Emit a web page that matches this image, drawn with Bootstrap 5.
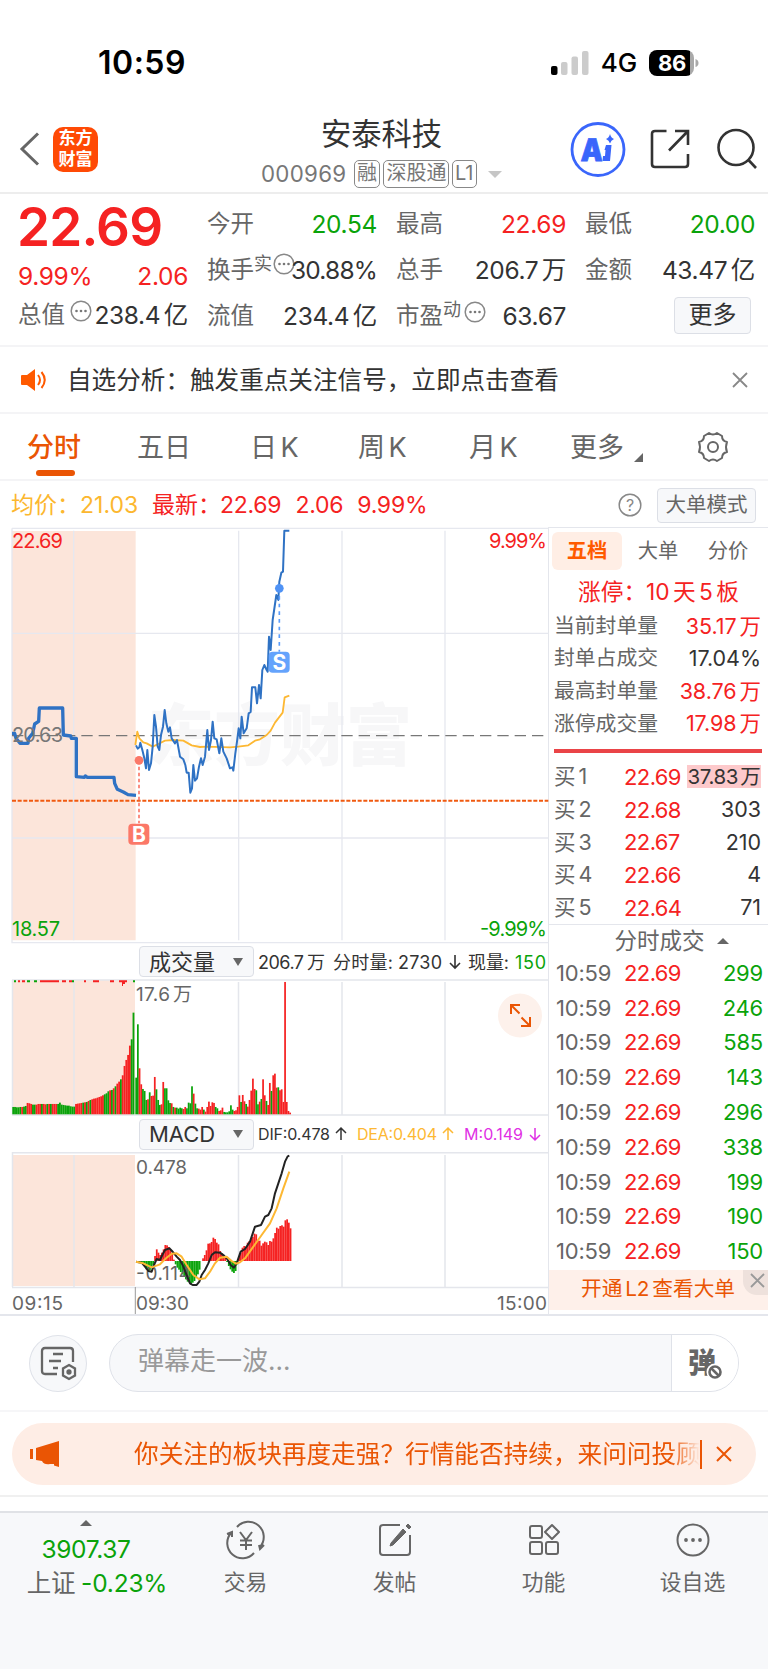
<!DOCTYPE html>
<html lang="zh-CN">
<head>
<meta charset="utf-8">
<meta name="viewport" content="width=device-width, initial-scale=1">
<title>安泰科技 000969</title>
<link href="https://cdn.jsdelivr.net/npm/bootstrap@5.3.0/dist/css/bootstrap.min.css" rel="stylesheet">
<style>
:root{--up:#f52222;--dn:#0aa30a;--or:#ea5504;--g6:#666;--ink:#333;--ln:#e4e6ec}
body{font-family:Inter,"Noto Sans CJK SC",sans-serif;color:var(--ink);background:#fff;width:768px;height:1670px;overflow:hidden;line-height:1;font-size:24px}
svg{display:block;flex:none;overflow:visible}
span,div{white-space:nowrap}
.up{color:var(--up)}.dn{color:var(--dn)}.g6{color:var(--g6)}.or{color:var(--or)}
.statusbar{height:106px;padding:19px 69px 0 98px;color:#000}
.clock{font-size:32px;font-weight:600;letter-spacing:.5px}
.net{font-size:26px;font-weight:500;letter-spacing:-.1px}
.batt{width:45px;height:26px;border-radius:8px;background:linear-gradient(90deg,#000 41px,#a9a9a9 41px);color:#fff;font-size:22px;font-weight:700;padding-left:9px;line-height:26px;letter-spacing:-.3px}
.topbar{height:88px;border-bottom:2px solid #ededed;padding:0 10px 0 20px}
.applogo{width:45px;height:45px;border-radius:10px;background:#ff4a05;color:#fff;font-size:17px;line-height:21px;font-weight:700;text-align:center;padding-top:1px}
.stockname{font-size:30.3px;line-height:30px}
.code{font-size:22.3px;letter-spacing:.3px;color:#777;line-height:28px}
.tagbox{border:1.6px solid #888;border-radius:5px;height:28px;line-height:25px;font-size:20px;color:#777;padding:0 2px}
.quote{height:153px;border-bottom:2px solid #f4f4f6;padding:0 13px 0 18px}
.quote .c0{width:170px;margin-right:19px}
.quote .cx{width:170px;margin-right:19px}
.qr{height:46px;display:flex;align-items:center;justify-content:space-between;letter-spacing:-.35px;font-size:24.5px;word-spacing:-3px}
.qr>.g6{letter-spacing:0;font-size:23.5px}
.bigp{font-size:53px;font-weight:600;letter-spacing:-.8px;height:69px;line-height:67px;margin-left:-1px}
.sup1{font-size:18px;position:relative;top:-8px}
.morebtn{border:1.5px solid #dcdfe6;background:#f7f8fa;border-radius:4px;text-align:center;color:var(--ink)}
.morebtn.g6{color:var(--g6)}
.notice{height:67px;border-bottom:2px solid #f4f4f6;padding:1px 20px 0 21px;font-size:24.6px}
.tabs{height:67px;border-bottom:2px solid #f4f4f6;color:var(--g6);font-size:27px;position:relative;word-spacing:-4px}
.tabs>span{line-height:67px}
.tabs .on{position:relative;color:var(--or);font-weight:500}
.tabs .on:after{content:"";position:absolute;left:9px;top:56px;width:39px;height:6px;border-radius:3px;background:var(--or)}
.avgrow{height:46px;padding:2px 12px 0 11px;font-size:23px}
.chartcol{width:537px;margin-left:12px;border-right:1.5px solid var(--ln)}
.sidecol{width:219px}
.selrow{height:37px;padding-left:127px;font-size:18px}
.selrow .morebtn{width:115px;height:31px;font-size:22px;display:flex;align-items:center;justify-content:space-between;padding:0 10px 0 9px}
.tri-d{border:5px solid transparent;border-top:8px solid #666;border-bottom:0}
.tri-u{border:6px solid transparent;border-bottom:6px solid #666;border-top:0}
.sidetabs span{width:70px;height:38px;line-height:37px;text-align:center;font-size:20.3px;color:var(--g6)}
.sidetabs .on{background:#ffeee5;border-radius:6px;color:#ff5a00;font-weight:700}
.sr{display:flex;align-items:center;padding:0 7px 0 5px;font-size:21.5px;word-spacing:-3px;letter-spacing:-.05px}
.sr>.g6{font-size:20.8px;letter-spacing:0}
.sr .l{width:70px;color:var(--g6);flex:none}
.sr .p{width:63px;color:var(--up);font-size:22px;letter-spacing:-.6px;flex:none}
.sr .v{margin-left:auto}
.hl{display:block;width:74px;background:#fdc9cb;line-height:23px;text-align:center;font-size:20.5px;letter-spacing:-.4px}
.l2{height:40px;background:#fef0ea;font-size:20.7px;color:var(--or);position:relative;text-align:center;line-height:38px;word-spacing:-3px;padding-right:1px}
.l2x{position:absolute;right:0;top:0;width:25px;height:25px;border-radius:0 0 0 14px;background:#eee1dc}
.danmu{height:98px;border-top:2px solid var(--ln);border-bottom:2px solid #f6f6f8;padding:0 29px 0 29px}
.rnd{width:58px;height:57px;border-radius:50%;border:1.5px solid #dfe2e9;background:#f7f8fa}
.pillin{width:631px;height:58px;border-radius:29px;border:1.5px solid #dfe2e9;background:#f7f8fa;overflow:hidden}
.promo{height:62px;margin:11px 12px 0;border-radius:31px;background:#feede5;color:var(--or);font-size:24.65px}
.promo .msg{width:566px;overflow:hidden;height:32px;line-height:33px;-webkit-mask:linear-gradient(90deg,#000 536px,transparent 566px);mask:linear-gradient(90deg,#000 536px,transparent 566px)}
.botbar{height:158px;border-top:2px solid #e0e2e6;background:#f7f8fa;margin-top:14px;color:var(--g6)}
.botbar .it{width:149px;font-size:21.8px;padding-top:10px}
</style>
</head>
<body>
<div class="statusbar d-flex align-items-center">
  <span class="clock">10:59</span>
  <svg class="ms-auto" width="38" height="24"><rect y="15" width="6.5" height="9" rx="2"/><g fill="#ccc"><rect x="10" y="11" width="6.5" height="13" rx="2"/><rect x="20.5" y="5.500" width="6.500" height="18.500" rx="2"/><rect x="31" width="6.500" height="24" rx="2"/></g></svg>
  <span class="net" style="margin-left:12px;margin-right:12px">4G</span>
  <span class="batt">86</span>
  <svg width="5" height="8"><path d="M1.500 0q3 1 3 4t-3 4z" fill="#a9a9a9"/></svg>
</div>
<div class="topbar d-flex align-items-center">
  <svg width="19" height="34" fill="none" stroke="#666" stroke-width="3"><path d="M18 1.500 2 17l16 15.500"/></svg>
  <div class="applogo" style="margin-left:14px">东方<br>财富</div>
  <div class="d-flex flex-column align-items-center" style="margin-left:162px;width:243px;padding-top:9px">
    <span class="stockname">安泰科技</span>
    <div class="d-flex align-items-center" style="margin-top:11px;gap:3.500px"><span class="code me-1">000969</span><span class="tagbox">融</span><span class="tagbox" style="margin-right:-1px">深股通</span><span class="tagbox">L1</span><svg width="14" height="7" style="margin-left:8px"><path d="M0 0h14L7 7z" fill="#c6c6c6"/></svg></div>
  </div>
  <svg class="ms-auto" width="56" height="56" viewBox="0 0 56 56"><circle cx="28" cy="28.500" r="26" fill="none" stroke="#3a66fb" stroke-width="2.800"/><text transform="translate(10.500 39.500) skewX(-2)" font-size="31" font-weight="900" fill="#3a66fb" stroke="#3a66fb" stroke-width=".8" textLength="22" lengthAdjust="spacingAndGlyphs">A</text><path d="M36 24h5.500l-1.500 16h-7.500l.5-5h2l.5-6h-1zM40 13q1 4 4 5-3 1-4 4.500-1-3.500-4-4.500 3-1 4-5z" fill="#3a66fb"/></svg>
  <svg width="40" height="40" style="margin-left:24px" fill="none" stroke="#333" stroke-width="2.600"><path d="M16.500 2H5Q2 2 2 5v30q0 3 3 3h30q3 0 3-3V25M38 16V2H25M38 2 19 21.500"/></svg>
  <svg width="42" height="42" style="margin-left:26px" fill="none" stroke="#333" stroke-width="2.600"><circle cx="20" cy="19.500" r="17.500"/><path d="M32 31.500 40 40"/></svg>
</div>
<div class="quote d-flex">
  <div class="c0"><div class="bigp up">22.69</div><div class="qr up" style="height:26px"><span>9.99%</span><span>2.06</span></div><div class="qr" style="margin-top:3px"><span class="g6">总值</span><svg width="22" height="22" style="margin:-8px -2px 0 0"><use href="#dots"/></svg><span>238.4 亿</span></div></div>
  <div class="cx pt-1"><div class="qr" style="margin-top:3px"><span class="g6">今开</span><span class="dn">20.54</span></div><div class="qr"><span class="g6">换手<span class="sup1">实</span></span><svg width="22" height="22" style="margin:-12px -1px 0 1px"><use href="#dots"/></svg><span style="letter-spacing:-.8px;margin-left:-3px">30.88%</span></div><div class="qr"><span class="g6">流值</span><span>234.4 亿</span></div></div>
  <div class="cx pt-1"><div class="qr" style="margin-top:3px"><span class="g6">最高</span><span class="up">22.69</span></div><div class="qr"><span class="g6">总手</span><span>206.7 万</span></div><div class="qr"><span class="g6">市盈<span class="sup1">动</span></span><svg width="22" height="22" style="margin:-8px 14px 0 0"><use href="#dots"/></svg><span>63.67</span></div></div>
  <div class="cx pt-1 me-0"><div class="qr" style="margin-top:3px"><span class="g6">最低</span><span class="dn">20.00</span></div><div class="qr"><span class="g6">金额</span><span>43.47 亿</span></div><div class="qr justify-content-end"><span class="morebtn" style="width:77px;height:37px;line-height:33px;margin-right:4px;letter-spacing:0;font-size:24px;margin-top:-2px">更多</span></div></div>
</div>
<svg width="0" height="0" class="position-absolute"><defs><g id="dots"><circle cx="11" cy="11" r="9.800" fill="none" stroke="#888" stroke-width="1.500"/><g fill="#777"><circle cx="6.500" cy="11" r="1.300"/><circle cx="11" cy="11" r="1.300"/><circle cx="15.500" cy="11" r="1.300"/></g></g></defs></svg>
<div class="notice d-flex align-items-center">
  <svg width="26" height="22"><path d="M1 6h5l8-6v22l-8-6H1Q0 16 0 15V7q0-1 1-1z" fill="#ff5a00"/><path d="M17 6q4 5 0 10M20.500 3q6.500 8 0 16" fill="none" stroke="#ff5a00" stroke-width="2"/></svg>
  <span style="margin-left:20px">自选分析：触发重点关注信号，立即点击查看</span>
  <svg class="ms-auto" width="16" height="16" stroke="#888" stroke-width="1.800"><path d="M1 1l14 14M15 1 1 15"/></svg>
</div>
<div class="tabs d-flex">
  <span class="on" style="margin-left:27px;width:110px">分时</span><span style="width:113px">五日</span><span style="width:108px">日 K</span><span style="width:111px">周 K</span><span style="width:101px">月 K</span><span>更多</span>
  <svg width="9" height="9" style="margin:39px 0 0 10px"><path d="M9 0v9H0z" fill="#666"/></svg>
  <svg width="32" height="32" style="margin:17px 0 0 54px" fill="none" stroke="#666" stroke-width="2" stroke-linejoin="round"><path d="M12 2q4 3 8 0l5 3q0 5 5 6-2 5 0 10-5 1-5 6l-5 3q-4-3-8 0l-5-3q0-5-5-6 2-5 0-10 5-1 5-6z"/><circle cx="16" cy="16" r="5"/></svg>
</div>
<div class="avgrow d-flex align-items-center">
  <span style="color:#fcb72f;width:69px">均价：</span><span style="color:#fcb72f;width:72px">21.03</span><span class="up" style="width:68px">最新：</span><span class="up d-flex" style="gap:14px;letter-spacing:-.25px"><span>22.69</span><span>2.06</span><span>9.99%</span></span>
  <svg class="ms-auto" width="24" height="24" style="margin-right:15px"><circle cx="12" cy="12" r="10.800" fill="none" stroke="#888" stroke-width="1.500"/><text x="12" y="17.500" font-size="16" text-anchor="middle" fill="#888">?</text></svg>
  <span class="morebtn g6" style="width:99px;height:35px;font-size:20.5px;line-height:31px">大单模式</span>
</div>
<div class="d-flex" style="height:787px">
 <div class="chartcol">
  <svg width="537" height="416" font-size="20">
   <g transform="translate(-12 -7) scale(.33333)" fill="none">
    <path d="M36 33H407V1261H36z" fill="#fce5da"/>
    <text x="444" y="720" font-size="200" font-weight="900" fill="#f7f7f8" textLength="792" lengthAdjust="spacingAndGlyphs">东方财富</text>
    <path d="M36 25H1645M36 25V1268H1645M36 340H1645M36 954H1645M221 32V1261M716 32V1261M1026 32V1261M1335 32V1261" stroke="#e6e8ef" stroke-width="4"/>
    <path d="M36 647H1645" stroke="#777" stroke-width="4" stroke-dasharray="34 18"/>
    <path d="M36 842H1645" stroke="#f05a10" stroke-width="6" stroke-dasharray="12 5"/>
    <g stroke-linejoin="round">
    <path d="M406 675 412 635 418 655 430 667 440 670 458 680 475 672 495 662 520 660 550 662 575 676 600 681 620 680 690 682 715 680 745 676 765 662 780 658 800 645 812 632 825 608 848 578 854 532 868 527" stroke="#fdb833" stroke-width="5.500"/>
    <path d="M36 640H44L48 655 60 670H84L86 655 98 640 104 612 116 604 118 564H188L190 645 212 648 214 655H229V770L253 772 256 768 262 772H342L344 790 352 808 370 816 384 824 408 826" stroke="#2f72c4" stroke-width="10"/>
    <path d="M408 676 413 686 418 682 421 668 427 690 433 715 438 745 442 690 447 750 453 730 458 680 463 585 468 620 473 680 478 690 483 645 489 620 494 570 499 610 505 635 510 622 515 655 525 670 531 660 540 710 550 718 556 735 560 758 566 758 571 818 576 805 580 735 585 782 591 775 597 740 603 715 608 735 615 710 622 630 627 690 633 660 638 605 643 655 650 658 658 700 664 655 670 695 680 715 690 745 697 742 700 752 706 700 711 665 716 625 721 655 725 590 731 640 740 625 746 580 752 576 756 502 766 502 771 550 777 495 782 535 787 450 793 435 800 450 803 455 807 350 812 390 818 300 829 225 835 240 838 185 844 158 849 155 853 32 868 32" stroke="#2f72c4" stroke-width="6"/>
    </g>
    <path d="M417 722V910" stroke="#fb7868" stroke-width="5" stroke-dasharray="11 7"/><circle cx="417" cy="721" r="13" fill="#fb7868"/><rect x="385" y="911" width="63" height="63" rx="12" fill="#fb7868"/>
    <path d="M838 205V395" stroke="#5b9dfb" stroke-width="5" stroke-dasharray="11 12"/><circle cx="838" cy="205" r="13" fill="#4f92f5"/><rect x="806" y="395" width="63" height="63" rx="12" fill="#64a3fc"/>
    <g fill="#fff" font-size="63" font-weight="700" text-anchor="middle"><text x="417" y="966">B</text><text x="838" y="449">S</text></g>
   </g>
   <g fill="#f52222"><text x="0" y="20.500" textLength="51">22.69</text><text x="477" y="20.500" textLength="58">9.99%</text></g>
   <text x="0" y="214.500" fill="#777" textLength="51">20.63</text>
   <g fill="#0aa30a"><text x="0" y="408.500" textLength="48">18.57</text><text x="468" y="408.500" textLength="67">-9.99%</text></g>
  </svg>
  <div class="selrow d-flex align-items-center">
   <div class="morebtn"><span>成交量</span><i class="tri-d"></i></div>
   <svg width="280" height="36"><g font-size="18" fill="#333"><text x="4" y="24.500" textLength="46">206.7</text><text x="53" y="24.500">万</text><text x="79" y="24.500" textLength="60">分时量:</text><text x="144" y="24.500" textLength="44">2730</text><text x="214" y="24.500" textLength="41">现量:</text><text x="261" y="24.500" textLength="31" fill="#0aa30a">150</text></g><path d="M201 11V24M196 19l5 5 5-5" fill="none" stroke="#333" stroke-width="1.600"/></svg>
  </div>
  <svg width="537" height="136">
   <path d="M0 0H123V134H0z" fill="#fce5da"/>
   <path d="M0 0H537M0 135H537M.5 0V135M62 2V135M226.500 2V135M330 2V135M433 2V135" stroke="#e4e6ec" stroke-width="1.500" fill="none"/>
   <path d="M2 1.300h2M15 1.300h3M22 1.300h3M60 1.300h2M121 1.300h2" stroke="#0aa30a" stroke-width="2"/><path d="M6 1.300h2M10 1.300h3M28 1.300h19M50 1.300h4M57 1.300h3M72 1.300h2M81 1.300h6M98 1.300h4M107 1.300h8M110 3h3M110 5h1" stroke="#f52222" stroke-width="2"/>
   <g id="vol"></g>
   <g font-size="19" fill="#666"><text x="124" y="21" textLength="34">17.6</text><text x="161" y="21">万</text></g>
   <circle cx="508" cy="35.500" r="22" fill="#fdf1eb"/><path d="M499 34v-9h9M499.500 25.500l8 8M518 37v9h-9M517.500 45.500l-8-8" stroke="#ea5504" stroke-width="2" fill="none"/>
  </svg>
  <div class="selrow d-flex align-items-center" style="height:36px">
   <div class="morebtn" style="height:31px"><span>MACD</span><i class="tri-d"></i></div>
   <svg width="280" height="36"><g font-size="16"><text x="4" y="23.500" textLength="72" fill="#333">DIF:0.478</text><text x="103" y="23.500" textLength="80" fill="#fdb833">DEA:0.404</text><text x="210" y="23.500" textLength="59" fill="#df2fe4">M:0.149</text></g><g fill="none" stroke-width="1.500"><path d="M87 24V12M82 17l5-5 5 5" stroke="#333"/><path d="M194 24V12M189 17l5-5 5 5" stroke="#fdb833"/><path d="M281 12V24M276 19l5 5 5-5" stroke="#df2fe4"/></g></svg>
  </div>
  <svg width="537" height="162">
   <path d="M0 3H123V134H0z" fill="#fce5da"/>
   <path d="M0 .8H537M0 135.500H537M.5 0V135M62 3V135M226.500 3V135M330 3V135M433 3V135" stroke="#e4e6ec" stroke-width="1.500" fill="none"/>
   <path d="M123.300 135V162" stroke="#999"/>
   <g id="macd"></g>
   <g font-size="19" fill="#666"><text x="124" y="21.500" textLength="51">0.478</text><text x="124" y="128" textLength="55">-0.114</text><text x="0" y="158" textLength="51">09:15</text><text x="124" y="158" textLength="53">09:30</text><text x="485" y="158" textLength="50">15:00</text></g>
   <g transform="translate(-12 -217) scale(.33333)" fill="none" stroke-width="6" stroke-linejoin="round">
    <path d="M408 980 425 983 435 995 445 1008 455 1010 462 990 470 972 480 975 487 960 495 945 508 940 516 948 522 955 530 965 540 975 548 990 558 1015 570 1045 578 1050 590 1050 598 1040 605 1020 615 1005 625 985 635 960 645 952 660 953 672 962 682 972 692 990 702 998 710 985 722 950 735 942 750 920 765 875 783 870 795 845 805 840 815 820 825 775 835 745 845 715 855 680 863 664 868 662" stroke="#222"/>
    <path d="M408 980 430 985 455 997 480 988 500 968 515 956 530 955 545 965 560 990 580 1020 598 1033 615 1030 630 1010 645 985 660 968 680 965 695 978 708 986 720 982 735 970 760 935 785 900 810 865 830 820 850 760 868 710" stroke="#fdb833"/>
   </g>
  </svg>
 </div>
 <div class="sidecol" style="border-top:1.500px solid var(--ln)">
  <div class="sidetabs d-flex" style="padding:4px 0 0 3px"><span class="on">五档</span><span style="margin-left:1px">大单</span><span>分价</span></div>
  <div class="up text-center" style="font-size:22.700px;height:38px;line-height:40px;margin-top:2px;word-spacing:-3px">涨停：10 天 5 板</div>
  <div class="seal"><div class="sr"><span class="g6">当前封单量</span><span class="v up">35.17 万</span></div><div class="sr"><span class="g6">封单占成交</span><span class="v">17.04%</span></div><div class="sr"><span class="g6">最高封单量</span><span class="v up">38.76 万</span></div><div class="sr"><span class="g6">涨停成交量</span><span class="v up">17.98 万</span></div></div>
  <div style="height:4px;background:#ea4447;margin:9px 6px 7px 5px"></div>
  <div class="bids"></div>
  <div class="d-flex justify-content-center align-items-center g6" style="border-top:1.500px solid var(--ln);height:32px;font-size:22.500px;gap:12px;padding-left:26px"><span>分时成交</span><i class="tri-u"></i></div>
  <div class="ticks"></div>
  <div class="l2">开通 L2 查看大单<div class="l2x"><svg width="25" height="24" stroke="#999" stroke-width="1.800"><path d="M8 4l13 13M21 4 8 17"/></svg></div></div>
 </div>
</div>
<div class="danmu d-flex align-items-center">
  <div class="rnd d-flex align-items-center justify-content-center"><svg width="38" height="34" fill="none" stroke="#666" stroke-width="2.300"><path d="M18 28H6q-3 0-3-3V5q0-3 3-3h25q3 0 3 3v11M14 8h10M10 15h12M14 22h5"/><path d="M30 19l6 3.500v7L30 33l-6-3.500v-7z"/><circle cx="30" cy="26" r="1.500" fill="#666"/></svg></div>
  <div class="pillin d-flex align-items-center" style="margin-left:22px"><span style="margin-left:28px;width:533px;font-size:26px;color:#999;padding-bottom:4px">弹幕走一波...</span><div class="h-100 bg-white d-flex align-items-center flex-fill" style="border-left:1.500px solid #dfe2e9;padding-left:16px"><svg width="36" height="36"><text x="0" y="28" font-size="28" font-weight="900" fill="#666">弹</text><circle cx="27" cy="27" r="6" fill="#fff" stroke="#fff" stroke-width="5"/><circle cx="27" cy="27" r="5.500" fill="#fff" stroke="#666" stroke-width="2.600"/><path d="M23 23l8 8" stroke="#666" stroke-width="2.500"/></svg></div></div>
</div>
<div class="promo d-flex align-items-center">
  <svg width="30" height="26" style="margin-left:18px" fill="#ea5504"><path d="M0 8h3v10H0zM6 7l23-7v26l-5-1.500v-1.500h-4q-6 1-8-3l-6-1z"/></svg>
  <span class="msg" style="margin-left:74px">你关注的板块再度走强？行情能否持续，来问问投顾</span>
  <i style="width:1.500px;height:29px;background:#ea5504;margin:0 14px 0 0"></i>
  <svg width="16" height="16" stroke="#ea5504" stroke-width="2"><path d="M1 1l14 14M15 1 1 15"/></svg>
</div>
<div style="height:12px;border-bottom:2px solid #f0f0f0"></div>
<div class="botbar d-flex">
  <div class="d-flex flex-column align-items-center" style="width:171px;padding:7px 0 0 16px;margin-right:0"><i class="tri-u" style="margin-right:15px"></i><span class="dn" style="font-size:24.500px;margin-top:11px;margin-right:15px;letter-spacing:-.35px">3907.37</span><span style="font-size:24.500px;margin-top:9px;margin-left:7px;letter-spacing:-.2px;word-spacing:-1px">上证 <span class="dn">-0.23%</span></span></div>
  <div class="it d-flex flex-column align-items-center"><svg width="40" height="34" fill="none" stroke="#666" stroke-width="2"><path d="M11 4A15 15 0 0 1 34 24M28 30A15 15 0 0 1 5 10M1 11l5-2v5M38 22l-4 4-1-4M14 9l6 8 6-8M20 17v10M14 17.500h12M14 22h12"/></svg><span style="margin-top:15px">交易</span></div>
  <div class="it d-flex flex-column align-items-center"><svg width="34" height="34" fill="none" stroke="#666" stroke-width="2"><path d="M22 2H5Q2 2 2 5v24q0 3 3 3h24q3 0 3-3V12"/><path d="M25 6l3 3-13 13-3 1 1-3zM28 3l2-2 3 3-2 2z" fill="#666" stroke-width="1"/></svg><span style="margin-top:15px">发帖</span></div>
  <div class="it d-flex flex-column align-items-center"><svg width="32" height="34" fill="none" stroke="#666" stroke-width="2"><rect x="2" y="3" width="12" height="12" rx="2"/><rect x="2" y="19" width="12" height="12" rx="2"/><rect x="18" y="19" width="12" height="12" rx="2"/><path d="M24 2l7 7-7 7-7-7z" stroke-linejoin="round"/></svg><span style="margin-top:15px">功能</span></div>
  <div class="it d-flex flex-column align-items-center"><svg width="34" height="34" fill="none" stroke="#666" stroke-width="2"><circle cx="17" cy="17" r="15.500"/><g fill="#666" stroke="none"><circle cx="10" cy="17" r="1.900"/><circle cx="17" cy="17" r="1.900"/><circle cx="24" cy="17" r="1.900"/></g></svg><span style="margin-top:15px">设自选</span></div>
</div>
<script src="https://cdn.jsdelivr.net/npm/bootstrap@5.3.0/dist/js/bootstrap.bundle.min.js"></script>
<script>
document.querySelectorAll('.seal .sr').forEach(e=>e.style.height='32.6px');
document.querySelector('.bids').innerHTML=[['22.69','<span class="hl">37.83 万</span>'],['22.68',303],['22.67',210],['22.66',4],['22.64',71]].map((r,i)=>`<div class="sr" style="height:32.8px"><span class="l">买 ${i+1}</span><span class="p">${r[0]}</span><span class="v">${r[1]}</span></div>`).join('');
document.querySelector('.ticks').innerHTML=[299,246,585,143,296,338,199,190,150].map(v=>`<div class="sr" style="height:34.8px;padding:0 5px 2px 7px;font-size:22px;letter-spacing:-.2px"><span class="l" style="width:68px">10:59</span><span class="p">22.69</span><span class="v dn">${v}</span></div>`).join('');
const U='#f52222',D='#0aa30a';
// Volume bars: heights with a trailing g for falling minutes, three units per pixel
const pre='22g 22g 21g 21g 22g 22 23g 25g 34 33 31 29g 29g 29 31 31 31g 31 30 31g 31 31g 31 31 31 31g 35g 29g 28g 27g 26g 26g 24g 23g 23g 31 32 33 34 35g 36 37g 40 43g 45 47 48 50 52 54 57 60g 63g 69g 72 73g 78 84g 92 98 105g 117 145 163 178 206 225g 305g'.split(' ');
const day='110g 270g 138 90 76g 70g 43g 45 66g 55 56 112 75g 43g 28g 30 97 78g 78g 42g 34g 33 22g 20 20g 17g 20g 18g 16 22 18g 35g 33g 84g 62 32g 18g 17 14 22 14g 8 22 38 25 36 34 22g 18g 10 12 20 7g 6g 6g 9g 27g 14g 10 12 22 57 37g 58 39 31g 23 43 71 107 76 72g 30g 38 46g 105 57 40g 28 94 70g 117 122 80 81g 72 75 37 397 37 10 5'.split(' ');
function draw(id,a,x0,pitch,base){document.getElementById(id).innerHTML+=a.map((s,i)=>{const h=parseFloat(s)/3;return `<rect x="${x0+i*pitch}" y="${h<0?base:base-h}" width="${pitch+.05}" height="${Math.abs(h)}" fill="${/g/.test(s)||h<0?D:U}"/>`}).join('')}
draw('vol',pre,.3,1.795,134.3);
draw('vol',day,123.3,1.692,134.3);
draw('macd','0 -2 -3 -5 -10 -15 -25 -30 -28 -22 -12 15 35 25 18 25 35 48 47 42 35 22 4 -10 -20 -26 -33 -40 -47 -55 -62 -64 -70 -65 -60 -50 -40 -26 0 8 18 32 52 53 57 70 66 55 50 30 23 17 12 -3 -15 -25 -32 -36 -30 -10 15 25 40 45 43 55 60 66 72 82 80 60 61 46 53 58 56 48 60 58 68 84 100 97 105 107 103 122 125 115 98'.split(' '),123.300,1.715,109);
</script>
</body>
</html>
